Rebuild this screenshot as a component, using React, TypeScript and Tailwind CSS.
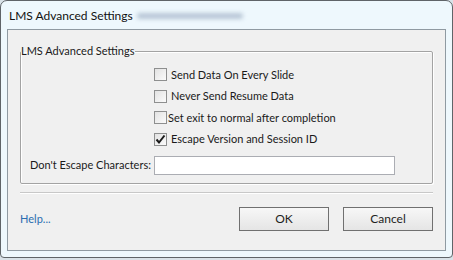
import React from "react";

const font = { fontFamily: 'Lato, "Noto Sans", sans-serif' };

function Check({ checked, label, tight }: { checked?: boolean; label: string; tight?: boolean }) {
  return (
    <div className="flex h-[21.5px] items-center">
      <div className="w-[133px] shrink-0" />
      <div className="flex h-[13px] w-[13px] shrink-0 items-center justify-center border border-[#8e8f8f] bg-gradient-to-br from-[#e2e2e2] to-[#fbfbfb]">
        {checked && (
          <svg width="11" height="11" viewBox="0 0 11 11">
            <path d="M1.5 5.5 L4 8.5 L9.5 1.5" fill="none" stroke="#1a1a1a" strokeWidth="2" />
          </svg>
        )}
      </div>
      <span className={tight ? "ml-[1px]" : "ml-[4px]"}>{label}</span>
    </div>
  );
}

export default function App() {
  return (
    <div className="h-[260px] w-[453px] bg-[#d9e2e8] text-[11px] text-[#1a1a1a]" style={font}>
      <div className="flex h-[258px] w-[453px] flex-col rounded-t-[7px] rounded-b-[4px] border border-[#5f6468] bg-[#eef8fd]">
        <div className="flex h-[28px] items-center pl-[8px] pt-[2px] text-[12px] text-[#111]">
          <span>LMS Advanced Settings</span>
          <span className="ml-[4px] h-[6px] w-[106px] rounded-full bg-[#b8c6d6] blur-[2px]" />
        </div>
        <div className="mx-[6px] mb-[6px] flex flex-1 flex-col border border-[#8f9aa2] bg-[#f0f0f0] px-[12px]">
          <fieldset className="mt-[13px] h-[141px] rounded-[2px] border border-[#a3a3a3] px-[0px] pb-0 shadow-[inset_1px_1px_0_#fff,1px_1px_0_#fff]">
            <legend className="ml-[0px] pr-[1px] leading-[16px]">LMS Advanced Settings</legend>
            <div className="mt-[5px] flex flex-col">
              <Check label="Send Data On Every Slide" />
              <Check label="Never Send Resume Data" />
              <Check label="Set exit to normal after completion" tight />
              <Check label="Escape Version and Session ID" checked />
            </div>
            <div className="mt-[5px] flex h-[20px] items-center">
              <div className="w-[133px] shrink-0 whitespace-nowrap pl-[9px]">Don't Escape Characters:</div>
              <div className="h-[19px] w-[241px] border border-[#abadb3] bg-white" />
            </div>
          </fieldset>
          <div className="mt-[8px] h-[2px] border-t border-b border-t-[#c8c8c8] border-b-white" />
          <div className="mt-[13px] flex items-center">
            <span className="text-[#2b6eb0]">Help...</span>
            <div className="flex-1" />
            <button className="h-[24px] w-[90px] border border-[#707070] bg-gradient-to-b from-[#f7f7f7] to-[#e5e5e5] text-[12px] text-[#1e1e1e]">OK</button>
            <button className="ml-[14px] h-[24px] w-[90px] border border-[#707070] bg-gradient-to-b from-[#f7f7f7] to-[#e5e5e5] text-[12px] text-[#1e1e1e]">Cancel</button>
          </div>
        </div>
      </div>
    </div>
  );
}
